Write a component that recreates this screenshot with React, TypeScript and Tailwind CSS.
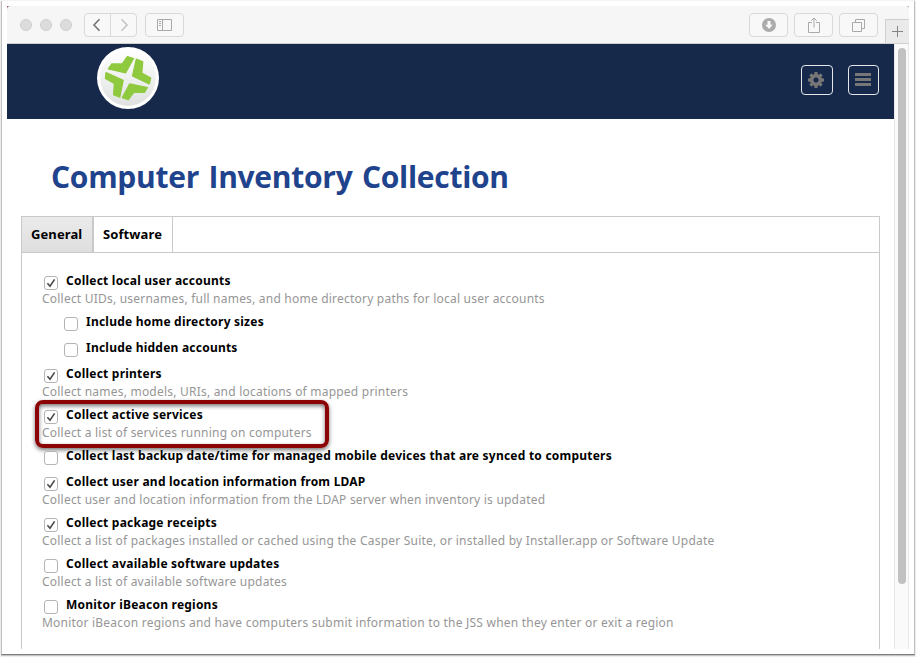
import React from "react";

type Item = {
  label: string;
  desc?: string;
  checked?: boolean;
  nested?: boolean;
  highlight?: boolean;
};

const items: Item[] = [
  { label: "Collect local user accounts", desc: "Collect UIDs, usernames, full names, and home directory paths for local user accounts", checked: true },
  { label: "Include home directory sizes", nested: true },
  { label: "Include hidden accounts", nested: true },
  { label: "Collect printers", desc: "Collect names, models, URIs, and locations of mapped printers", checked: true },
  { label: "Collect active services", desc: "Collect a list of services running on computers", checked: true, highlight: true },
  { label: "Collect last backup date/time for managed mobile devices that are synced to computers" },
  { label: "Collect user and location information from LDAP", desc: "Collect user and location information from the LDAP server when inventory is updated", checked: true },
  { label: "Collect package receipts", desc: "Collect a list of packages installed or cached using the Casper Suite, or installed by Installer.app or Software Update", checked: true },
  { label: "Collect available software updates", desc: "Collect a list of available software updates" },
  { label: "Monitor iBeacon regions", desc: "Monitor iBeacon regions and have computers submit information to the JSS when they enter or exit a region" },
];

function Checkbox({ checked }: { checked?: boolean }) {
  return (
    <span className="mt-[5px] block h-[14px] w-[14px] shrink-0 rounded-[3px] border border-[#b4b4b4] bg-white">
      {checked && (
        <svg viewBox="0 0 12 12" className="block h-3 w-3" fill="none" stroke="#484848" strokeWidth="1.6">
          <path d="M2.400 6.300 5 9.300 9.600 2.400" />
        </svg>
      )}
    </span>
  );
}

function Row({ item }: { item: Item }) {
  return (
    <div className={`relative mb-[6px] whitespace-nowrap ${item.nested ? "pl-[20px]" : ""}`}>
      <div className="flex h-[20px] items-start pl-[2px]">
        <Checkbox checked={item.checked} />
        <span className="ml-[8px] text-[12px] leading-[20px] font-bold tracking-[0.225px] text-black">{item.label}</span>
      </div>
      {item.desc && <div className="h-[15px] text-[12px] leading-[15px] tracking-[0.215px] text-[#969696]">{item.desc}</div>}
      {item.highlight && (
        <div className="absolute -top-[5px] -left-[7px] h-[48px] w-[294px] rounded-[8px] border-4 border-[#8b0304] shadow-[0_2px_4px_rgba(0,0,0,0.55),inset_0_2px_4px_rgba(0,0,0,0.55)]" />
      )}
    </div>
  );
}

function ToolButton({ className, children }: { className: string; children: React.ReactNode }) {
  return (
    <div className={`flex h-[24px] items-center justify-center rounded-[4px] border border-[#d9d9d9] bg-[#f8f8f8] ${className}`}>
      {children}
    </div>
  );
}

function Toolbar() {
  return (
    <div className="h-[38px] shrink-0 bg-[linear-gradient(135deg,#8a4a48_0,#e8dcdc_4px,transparent_5px),linear-gradient(225deg,#b8b8b8_0,#dddddd_3px,transparent_4px)]">
      <div className="flex h-[38px] items-start rounded-t-[4px] border-b border-[#cfcfcf] bg-[#f6f6f6]">
        <div className="mt-[13px] ml-[13px] flex gap-[8px]">
          <span className="h-3 w-3 rounded-full border border-[#cfcfcf] bg-[#dcdcdc]" />
          <span className="h-3 w-3 rounded-full border border-[#cfcfcf] bg-[#dcdcdc]" />
          <span className="h-3 w-3 rounded-full border border-[#cfcfcf] bg-[#dcdcdc]" />
        </div>
        <div className="mt-[7px] ml-[12px] flex">
          <ToolButton className="w-[27px] rounded-r-none">
            <svg width="10" height="14" viewBox="0 0 10 14" fill="none" stroke="#737373" strokeWidth="1.6" className="-ml-[2px]">
              <path d="M7.500 1.300 2 7l5.500 5.700" />
            </svg>
          </ToolButton>
          <ToolButton className="-ml-px w-[27px] rounded-l-none">
            <svg width="10" height="14" viewBox="0 0 10 14" fill="none" stroke="#c4c4c4" strokeWidth="1.6">
              <path d="M2.500 1.300 8 7l-5.500 5.700" />
            </svg>
          </ToolButton>
        </div>
        <ToolButton className="mt-[7px] ml-[8px] w-[39px]">
          <svg width="15" height="12" viewBox="0 0 15 12" fill="none" stroke="#a9a9a9">
            <path d="M.5.5h14v11H.5zM5.500.5v11M2 2.500h2M2 4.500h2M2 6.500h2" />
          </svg>
        </ToolButton>
        <div className="mt-[7px] ml-auto flex gap-[6px]">
          <ToolButton className="w-[39px]">
            <svg width="14" height="14" viewBox="0 0 14 14">
              <circle cx="7" cy="7" r="7" fill="#ababab" />
              <path d="M5.500 3h3v3.800h2.300L7 10.900 3.200 6.800h2.300z" fill="#f8f8f8" />
            </svg>
          </ToolButton>
          <ToolButton className="w-[39px]">
            <svg width="12" height="16" viewBox="0 0 12 16" fill="none" stroke="#a9a9a9" className="-mt-px">
              <path d="M4 5.500H.5v10h11v-10H8M6 10.500V1M3.300 3.700 6 1l2.700 2.700" />
            </svg>
          </ToolButton>
          <ToolButton className="w-[39px]">
            <svg width="13" height="13" viewBox="0 0 13 13" fill="none" stroke="#a9a9a9">
              <path d="M.5 3.500h9v9h-9zM3.500 3.500v-3h9v9h-3" />
            </svg>
          </ToolButton>
        </div>
        <div className="mt-[13px] ml-[7px] flex h-[24px] w-[24px] items-center justify-center border-t border-l border-[#cfcfcf] bg-[#eaeaea]">
          <svg width="11" height="11" viewBox="0 0 11 11" stroke="#858585">
            <path d="M5.500 0v11M0 5.500h11" />
          </svg>
        </div>
      </div>
    </div>
  );
}

function Logo() {
  return (
    <svg width="62" height="62" viewBox="0 0 62 62" className="mt-[3px] ml-[90px]">
      <defs>
        <linearGradient id="disc" x1="0" y1="0" x2="0" y2="1">
          <stop offset="0" stopColor="#fff" />
          <stop offset="1" stopColor="#dfe1e1" />
        </linearGradient>
      </defs>
      <circle cx="31" cy="31" r="31" fill="#fff" />
      <circle cx="31" cy="31" r="28" fill="url(#disc)" />
      <g fill="#8fc93e" stroke="#8fc93e" strokeWidth="1.2" strokeLinejoin="round">
        <path d="M30.300 9.500 36.600 11.500 28.700 25.800 11.300 21.900 14.800 16.900 25.300 16.900z" />
        <path d="M39.300 12 45.800 14.800 44.800 26 53.700 31 52.300 37 35.500 28.900z" />
        <path d="M9 25.500 26.200 33.300 22.800 50.200 16.600 47.700 17.300 36.600 8.400 31.400z" />
        <path d="M32.700 36.900 50.500 40.500 47.400 45.400 36.800 45.400 31.300 52.700 25.300 50.600z" />
      </g>
    </svg>
  );
}

function Header() {
  return (
    <header className="flex h-[75px] shrink-0 items-start bg-[#16294a]">
      <Logo />
      <div className="mt-[21px] mr-[15px] ml-auto flex gap-[15px]">
        <div className="flex h-[30px] w-[32px] items-start justify-start rounded-[4px] border border-[#e4e6ea] pt-[6px] pl-[6px]">
          <svg width="16" height="16" viewBox="-8 -8 16 16">
            <g fill="#777">
              <rect x="-1.700" y="-8" width="3.400" height="16" rx=".7" />
              <rect x="-1.700" y="-8" width="3.400" height="16" rx=".7" transform="rotate(45)" />
              <rect x="-1.700" y="-8" width="3.400" height="16" rx=".7" transform="rotate(90)" />
              <rect x="-1.700" y="-8" width="3.400" height="16" rx=".7" transform="rotate(135)" />
              <circle r="6" />
            </g>
            <circle r="2.500" fill="#16294a" />
          </svg>
        </div>
        <div className="flex h-[30px] w-[31px] flex-col items-start gap-[2px] rounded-[4px] border border-[#e4e6ea] pt-[7px] pl-[6px]">
          <span className="h-[3px] w-[16px] bg-[#777]" />
          <span className="h-[3px] w-[16px] bg-[#777]" />
          <span className="h-[3px] w-[16px] bg-[#777]" />
        </div>
      </div>
    </header>
  );
}

export default function App() {
  return (
    <div className="h-[657px] w-[916px] overflow-hidden bg-[#f4f4f4] pt-px pl-px font-['Noto_Sans','Lucida_Grande',sans-serif]">
      <div className="h-[654px] w-[914px] border border-t-0 border-[#c0c0c0] border-b-[#7e7e7e] bg-white pt-[5px] pl-[5px] shadow-[0_1px_1px_rgba(0,0,0,0.2)]">
        <div className="flex h-[643px] w-[902px] flex-col overflow-hidden">
          <Toolbar />
          <div className="flex min-h-0 flex-1">
            <div className="flex w-[887px] shrink-0 flex-col overflow-hidden">
              <Header />
              <h1 className="mt-[38px] ml-[44px] h-[40px] font-['Open_Sans',sans-serif] text-[30px] leading-[40px] font-bold tracking-[-0.28px] [word-spacing:2px] whitespace-nowrap text-[#1f438c]">
                Computer Inventory Collection
              </h1>
              <div className="mt-[19px] ml-[14px] flex h-[37px] w-[859px] shrink-0 border border-[#c9c9c9] text-[13px] font-bold tracking-[0.1px] text-black">
                <div className="flex w-[72px] items-center border-r-2 border-[#c9c9c9] bg-gradient-to-b from-[#ebebeb] to-[#dedede] pl-[9px]">General</div>
                <div className="flex w-[79px] items-center border-r border-[#c9c9c9] pl-[9px]">Software</div>
              </div>
              <div className="ml-[14px] w-[859px] flex-1 border-x border-[#c9c9c9] pt-[18px] pl-[20px]">
                {items.map((item) => (
                  <Row key={item.label} item={item} />
                ))}
              </div>
            </div>
            <div className="w-[15px] border-x border-[#e7e7e7] bg-[#fafafa] pt-[4px] pl-[3px]">
              <div className="h-[536px] w-[8px] rounded-full bg-[#c1c1c1]" />
            </div>
          </div>
        </div>
      </div>
    </div>
  );
}
